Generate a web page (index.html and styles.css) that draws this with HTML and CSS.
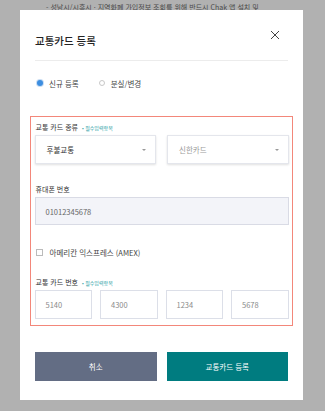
FILE: index.html
```html
<!DOCTYPE html>
<html lang="ko">
<head>
<meta charset="utf-8">
<link rel="stylesheet" href="styles.css">
</head>
<body>
<div class="bg-text">- 성남시/시흥시 · 지역화폐 가입정보 조회를 위해 반드시 Chak 앱 설치 및</div>
<div class="modal">
  <div class="header">
    <div class="title">교통카드 등록</div>
    <svg class="close" width="10" height="10" viewBox="0 0 10 10"><path d="M1 1L9 9M9 1L1 9" stroke="#444" stroke-width="1" fill="none"/></svg>
  </div>
  <div class="radios">
    <label class="radio"><span class="dot on"></span>신규 등록</label>
    <label class="radio"><span class="dot"></span>분실/변경</label>
  </div>
  <div class="box">
    <div class="label">교통 카드 종류 <span class="req">• 필수입력항목</span></div>
    <div class="selects">
      <div class="select"><span>후불교통</span><span class="caret"></span></div>
      <div class="select muted"><span>신한카드</span><span class="caret"></span></div>
    </div>
    <div class="label mt-phone">휴대폰 번호</div>
    <div class="phone">01012345678</div>
    <label class="check"><span class="cb"></span>아메리칸 익스프레스 (AMEX)</label>
    <div class="label mt-card">교통 카드 번호 <span class="req">• 필수입력항목</span></div>
    <div class="cards">
      <div class="cardnum">5140</div>
      <div class="cardnum">4300</div>
      <div class="cardnum">1234</div>
      <div class="cardnum">5678</div>
    </div>
  </div>
  <div class="buttons">
    <div class="btn cancel">취소</div>
    <div class="btn ok">교통카드 등록</div>
  </div>
</div>
</body>
</html>
```
FILE: styles.css
```css
html, body {
  margin: 0;
  padding: 0;
}
body {
  width: 325px;
  height: 411px;
  background: #b1b1b1;
  font-family: "Noto Sans CJK KR", "Noto Sans", sans-serif;
  position: relative;
  overflow: hidden;
}
.bg-text {
  padding-top: 1px;
  padding-left: 46px;
  font-size: 7px;
  line-height: 12px;
  color: #4a4a4a;
  white-space: nowrap;
}
.modal {
  position: absolute;
  left: 20px;
  top: 10px;
  width: 283px;
  height: 390px;
  background: #fff;
  box-sizing: border-box;
  padding: 0 15px;
  display: flex;
  flex-direction: column;
}
.header {
  display: flex;
  justify-content: space-between;
  align-items: flex-start;
  height: 51px;
  box-sizing: border-box;
  padding-top: 20px;
  border-bottom: 1px solid #ececec;
}
.title {
  margin-top: 2px;
  font-size: 10.5px;
  line-height: 18px;
  color: #222;
  font-weight: 500;
}
.close {
  display: block;
  margin-right: 8px;
}
.radios {
  display: flex;
  gap: 20px;
  margin-top: 16px;
  height: 12px;
  align-items: center;
  padding-left: 2px;
}
.radio {
  display: flex;
  align-items: center;
  font-size: 7.5px;
  color: #444;
  gap: 6px;
}
.dot {
  width: 6px;
  height: 6px;
  border-radius: 50%;
  border: 1px solid #c8c8c8;
  box-sizing: border-box;
}
.dot.on {
  border: none;
  background: #3d8ee0;
  box-shadow: 0 0 0 1px #c9ddf4;
}
.box {
  margin: 27px -5px 0;
  border: 1.5px solid #f3877a;
  padding: 4px 3.5px 5.5px;
  display: flex;
  flex-direction: column;
}
.label {
  font-size: 7px;
  line-height: 12px;
  color: #333;
  padding-left: 1px;
}
.req {
  font-size: 5px;
  color: #1a9aa2;
  margin-left: 2px;
}
.selects {
  display: flex;
  gap: 11px;
  margin-top: 1px;
}
.select {
  flex: 1;
  height: 29px;
  box-sizing: border-box;
  border: 1px solid #e4e6ec;
  box-shadow: 0 1px 2px rgba(0,0,0,0.12);
  display: flex;
  align-items: center;
  justify-content: space-between;
  padding: 0 9px 0 11px;
  font-size: 7.5px;
  color: #333;
}
.select.muted {
  color: #9a9a9a;
}
.caret {
  width: 0;
  height: 0;
  border-left: 2.5px solid transparent;
  border-right: 2.5px solid transparent;
  border-top: 2.5px solid #999;
}
.mt-phone {
  margin-top: 19px;
}
.phone {
  margin-top: 2px;
  height: 28px;
  box-sizing: border-box;
  background: #f3f4f9;
  border: 1px solid #d9dbe5;
  display: flex;
  align-items: center;
  padding-left: 10px;
  font-size: 7.5px;
  color: #666;
}
.check {
  margin-top: 21px;
  height: 12px;
  display: flex;
  align-items: center;
  gap: 7px;
  padding-left: 1px;
  font-size: 7.5px;
  color: #444;
}
.cb {
  width: 5px;
  height: 5px;
  border: 1px solid #bbb;
}
.mt-card {
  margin-top: 18px;
}
.cards {
  display: flex;
  gap: 8px;
  margin-top: 1px;
}
.cardnum {
  flex: 1;
  height: 29px;
  box-sizing: border-box;
  border: 1px solid #dcdfe8;
  display: flex;
  align-items: center;
  padding-left: 10px;
  font-size: 7.5px;
  color: #8a8a8a;
}
.buttons {
  display: flex;
  gap: 10px;
  margin-top: 26px;
}
.btn {
  flex: 1;
  height: 29px;
  display: flex;
  align-items: center;
  justify-content: center;
  font-size: 7.5px;
  color: #fff;
}
.cancel {
  background: #636d84;
}
.ok {
  background: #007c80;
}
```
